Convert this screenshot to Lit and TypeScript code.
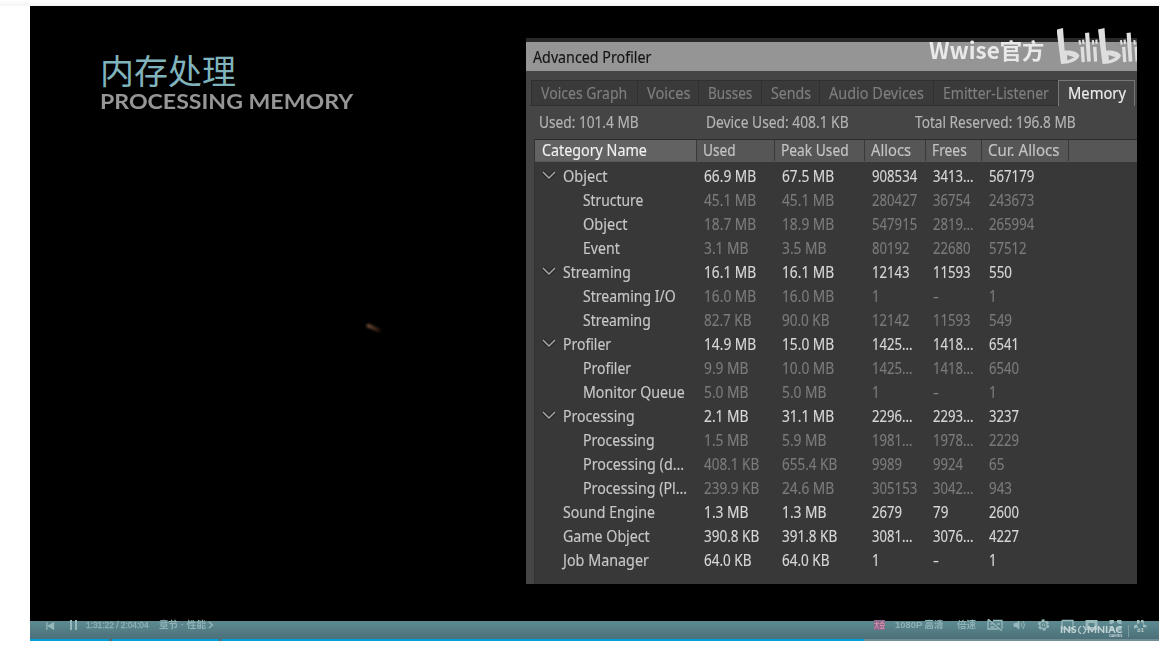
import { LitElement, html, css, svg } from "lit";
import { customElement, property } from "lit/decorators.js";

/** A single line of text condensed or widened to a given width. */
@customElement("fit-text")
class FitText extends LitElement {
  @property() text = "";
  @property({ type: Number }) w = 0;
  static styles = css`
    :host { display: block; white-space: pre; overflow: visible; flex: none; }
    span { display: inline-block; vertical-align: top; transform-origin: 0 50%; }
  `;
  updated() {
    const s = this.renderRoot.querySelector("span") as HTMLElement;
    this.style.width = this.w + "px";
    const natural = s.offsetWidth;
    if (natural) s.style.transform = `scaleX(${this.w / natural})`;
  }
  render() { return html`<span>${this.text}</span>`; }
}

type Row = [number, string, number, string, string, string, string, string];
// level: 0 = expandable group, 1 = child, 2 = plain top-level entry
const ROWS: Row[] = [
  [0, "Object", 44.5, "66.9 MB", "67.5 MB", "908534", "3413...", "567179"],
  [1, "Structure", 60.5, "45.1 MB", "45.1 MB", "280427", "36754", "243673"],
  [1, "Object", 44.5, "18.7 MB", "18.9 MB", "547915", "2819...", "265994"],
  [1, "Event", 37, "3.1 MB", "3.5 MB", "80192", "22680", "57512"],
  [0, "Streaming", 68, "16.1 MB", "16.1 MB", "12143", "11593", "550"],
  [1, "Streaming I/O", 93, "16.0 MB", "16.0 MB", "1", "-", "1"],
  [1, "Streaming", 68, "82.7 KB", "90.0 KB", "12142", "11593", "549"],
  [0, "Profiler", 48, "14.9 MB", "15.0 MB", "1425...", "1418...", "6541"],
  [1, "Profiler", 48, "9.9 MB", "10.0 MB", "1425...", "1418...", "6540"],
  [1, "Monitor Queue", 102, "5.0 MB", "5.0 MB", "1", "-", "1"],
  [0, "Processing", 72, "2.1 MB", "31.1 MB", "2296...", "2293...", "3237"],
  [1, "Processing", 72, "1.5 MB", "5.9 MB", "1981...", "1978...", "2229"],
  [1, "Processing (d...", 101, "408.1 KB", "655.4 KB", "9989", "9924", "65"],
  [1, "Processing (Pl...", 104, "239.9 KB", "24.6 MB", "305153", "3042...", "943"],
  [2, "Sound Engine", 92, "1.3 MB", "1.3 MB", "2679", "79", "2600"],
  [2, "Game Object", 87, "390.8 KB", "391.8 KB", "3081...", "3076...", "4227"],
  [2, "Job Manager", 86, "64.0 KB", "64.0 KB", "1", "-", "1"],
];
const TABS: [string, number, number][] = [
  ["Voices Graph", 86, 106], ["Voices", 43, 61], ["Busses", 44, 63], ["Sends", 40, 58],
  ["Audio Devices", 95, 114], ["Emitter-Listener", 106, 125], ["Memory", 58, 77],
];
const HEADS: [string, number][] = [
  ["Category Name", 104.5], ["Used", 32.5], ["Peak Used", 68], ["Allocs", 40.5], ["Frees", 34.5], ["Cur. Allocs", 71.5],
];
const ADV: Record<string, number> = { M: 13.4, B: 9, K: 8.4, " ": 4, ".": 3.3, "-": 5.7 };
const widthOf = (s: string) => [...s].reduce((a, c) => a + (ADV[c] ?? 7.55), 0);

@customElement("memory-profiler")
class MemoryProfiler extends LitElement {
  static styles = css`
    :host {
      display: flex; flex-direction: column; box-sizing: border-box; width: 611px; height: 546px;
      background: #454545; color: #b9b9b9; border-top: 4px solid #292929; overflow: hidden;
      font: 16px/24px "Noto Sans", sans-serif; -webkit-text-stroke: .15px currentColor;
    }
    .title { height: 29px; background: #959595; color: #141414; padding: 3px 0 0 7px; box-sizing: border-box; flex: none; }
    .tabs { display: flex; margin: 9px 0 0 4px; height: 25px; flex: none; border-bottom: 1px solid #343434; }
    .tab {
      box-sizing: border-box; height: 26px; padding: 0 0 0 9px; color: #7f7f7f; background: #3a3a3a;
      border: 1px solid #303030; border-right: 0;
    }
    .tab:first-child { margin-left: 1px; }
    .tab.on { background: #454545; color: #ececec; border: 1px solid #777; border-bottom: 0; }
    .stats { display: flex; height: 33px; padding: 4px 0 0 13px; box-sizing: border-box; flex: none; color: #b5b5b5; }
    .stats :nth-child(2) { margin-left: 67px; }
    .stats :nth-child(3) { margin-left: 66px; }
    .list { margin-left: 8px; flex: 1; background: #383838; border-left: 1px solid #333; border-top: 1px solid #2c2c2c; }
    .head, .row { display: grid; grid-template-columns: 162px 78px 90px 61px 56px 87px 1fr; }
    .head { background: #565656; height: 22px; line-height: 21px; color: #c4c4c4; }
    .head div { padding-left: 6px; border-right: 1px solid #393939; height: 21px; }
    .head div:first-child { padding-left: 7px; background: #626262; color: #f0f0f0; }
    .head div:last-child { border: 0; }
    .rows { padding-top: 2px; }
    .row { height: 24px; color: #d8d8d8; }
    .row > fit-text { margin-left: 7px; }
    .row.l1 > fit-text { color: #7b7b7b; }
    .name { display: flex; padding-left: 28px; color: #c7c7c7; }
    .l0 .name { padding-left: 6px; }
    .l1 .name { padding-left: 48px; }
    .name svg { width: 16px; height: 10px; margin: 6px 6px 0 0; flex: none; }
  `;
  render() {
    return html`
      <div class="title"><fit-text text="Advanced Profiler" .w=${118.5}></fit-text></div>
      <div class="tabs">${TABS.map(([t, w, box], i) => html`
        <div class="tab ${i === 6 ? "on" : ""}" style="width:${box}px"><fit-text .text=${t} .w=${w}></fit-text></div>`)}
      </div>
      <div class="stats">
        <fit-text text="Used: 101.4 MB" .w=${100}></fit-text>
        <fit-text text="Device Used: 408.1 KB" .w=${143}></fit-text>
        <fit-text text="Total Reserved: 196.8 MB" .w=${160.5}></fit-text>
      </div>
      <div class="list">
        <div class="head">${HEADS.map(([t, w]) => html`<div><fit-text .text=${t} .w=${w}></fit-text></div>`)}<div></div></div>
        <div class="rows">${ROWS.map(([l, n, w, ...vals]) => html`
          <div class="row l${l}">
            <div class="name">
              ${l === 0 ? html`<svg viewBox="0 0 16 10"><path d="M2 2l6 6 6-6" fill="none" stroke="#292929" stroke-width="4"/><path d="M2 2l6 6 6-6" fill="none" stroke="#ababab" stroke-width="1.4"/></svg>` : ""}
              <fit-text .text=${n} .w=${w}></fit-text>
            </div>
            ${vals.map((v) => html`<fit-text .text=${v} .w=${widthOf(v)}></fit-text>`)}
          </div>`)}
        </div>
      </div>`;
  }
}

const biliHalf = (x: number) => svg`
  <g transform="translate(${x} 0)">
    <path fill-rule="evenodd" d="M-.5 1.500L6 0l1.600 22.500C15 22 21 24 22.500 27.500c-1 5-10 8.500-18.500 8.500zM10 27l.4 5.500 6.800-3.300z"/>
    <path d="M23.500 19l3.400-.3 1 15.300-3.300.3zM28 5l4.200-.6 1.600 29.200-3.600.2zM36 19l3.500-.3.700 14.800-3.200.2z"/>
    <path d="M21.300 12.200l2.200-.3.700 4.600-2 .2zM25 11.700l2.200-.2.300 4.600-2 .2zM34.700 12.200l2.200-.3.500 4.600-2 .2zM38.300 11.700l2.200-.2v4.600l-2 .2z"/>
  </g>`;

@customElement("control-bar")
class ControlBar extends LitElement {
  static styles = css`
    :host { display: flex; flex-direction: column; height: 20px; font: 9px/10px "Liberation Sans", "Noto Sans CJK SC", sans-serif; color: #90b3b7; }
    .bar { position: relative; display: flex; height: 18px; background: linear-gradient(#5d8b91, #4b7079); box-sizing: border-box; padding-left: 15px; }
    svg { display: block; flex: none; fill: none; stroke: #98b9bc; stroke-width: 1.3; }
    .prev { width: 10px; height: 8px; margin-top: 1px; }
    .pause { width: 9px; height: 10px; margin: -1px 0 0 14px; }
    .time { margin: -1px 0 0 8px; -webkit-text-stroke: .3px currentColor; }
    .chapter { margin: -1px 0 0 10px; font-weight: 700; }
    .more { width: 6px; height: 8px; margin: 0 0 0 2px; }
    .right { display: flex; margin-left: auto; width: 285px; }
    .badge { width: 11px; height: 10px; margin-top: -1px; background: #8a6889; color: #cf8fab; font: 700 8px/10px "Noto Sans CJK JP", sans-serif; }
    .quality { margin: -1px 0 0 10px; font-weight: 700; }
    .speed { margin: -1px 0 0 14px; font-weight: 700; }
    .subs { width: 16px; height: 12px; margin: -2px 0 0 11px; }
    .vol { width: 13px; height: 12px; margin: -2px 0 0 10px; }
    .gear { width: 13px; height: 12px; margin: -2px 0 0 11px; }
    .win { width: 13px; height: 12px; margin: -2px 0 0 11px; }
    .win.bold { stroke-width: 3; }
    .logo { position: absolute; left: 1030px; top: 4px; display: flex; color: #c2d2d4; font: 900 9px/9px Lato, sans-serif; }
    .eye { width: 10px; height: 8px; margin-top: 1px; stroke: #c2d2d4; }
    .games { position: absolute; left: 49px; top: 9px; font-size: 3.500px; line-height: 4px; }
    .rule { position: absolute; left: 1098px; top: 4px; width: 1px; height: 12px; background: #7c9da2; }
    .page { position: absolute; left: 1103px; top: -2px; width: 14px; height: 12px; fill: #9fbcbf; stroke: none; }
    .num { position: absolute; left: 1107px; top: 5px; font: 700 6px/8px Lato, sans-serif; color: #c2d2d4; }
    .progress { display: flex; height: 2px; }
    .done { background: #00a1d6; }
    .gap { width: 3px; background: #4f7078; }
    .rest { flex: 1; background: #718f95; }
  `;
  render() {
    return html`
      <div class="bar">
        <svg class="prev" viewBox="0 0 10 9"><path d="M1.500 0v9M9 1v7L3 4.500z" fill="#98b9bc"/></svg>
        <svg class="pause" viewBox="0 0 9 10"><path d="M2 0v10M7 0v10" stroke-width="2"/></svg>
        <fit-text class="time" text="1:31:22 / 2:04:04" .w=${63}></fit-text>
        <fit-text class="chapter" text="章节 · 性能" .w=${47}></fit-text>
        <svg class="more" viewBox="0 0 6 8"><path d="M1 1l3.500 3L1 7"/></svg>
        <div class="right">
          <fit-text class="badge" text="大会" .w=${11}></fit-text>
          <fit-text class="quality" text="1080P 高清" .w=${48}></fit-text>
          <fit-text class="speed" text="倍速" .w=${19}></fit-text>
          <svg class="subs" viewBox="0 0 16 12"><path d="M3 1.500H1v8.500h10M6 1.500h9V10M1 0l14 12M3.500 5h2M3.500 8h4M10 5h3"/></svg>
          <svg class="vol" viewBox="0 0 13 12"><path d="M1 4.500h2l3-2.500v8L3 7.500H1z" fill="#98b9bc" stroke-width=".8"/><path d="M8 4q2 2 0 4M10 2q3 4 0 8" stroke-width="1"/></svg>
          <svg class="gear" viewBox="0 0 13 12"><circle cx="6.500" cy="6" r="4.600" stroke-width="2.200" stroke-dasharray="2.900 1.920"/><circle cx="6.500" cy="6" r="3.700"/><circle cx="6.500" cy="6" r="1.300" stroke-width="1"/></svg>
          <svg class="win" viewBox="0 0 13 12"><path d="M1 1.500h11v5M1 1.500v8h5M8 9h4v2H8z"/></svg>
          <svg class="win bold" viewBox="0 0 13 12"><path d="M2 2.500h9v7H2z"/></svg>
          <svg class="win bold" viewBox="0 0 13 12"><path d="M2 5V2.500h3M8 2.500h3V5M11 7v3H8M5 10H2V7"/></svg>
        </div>
        <div class="logo">
          <fit-text text="INS" .w=${17}></fit-text>
          <svg class="eye" viewBox="0 0 10 9"><path d="M4 0Q-2 4.500 4 9M6 0Q12 4.500 6 9"/></svg>
          <fit-text text="MNIAC" .w=${35}></fit-text>
          <fit-text class="games" text="GAMES" .w=${13}></fit-text>
        </div>
        <div class="rule"></div>
        <svg class="page" viewBox="0 0 14 12"><path d="M4 1h2.500v3L4 5zM8 1h2.500l.5 4-3-2zM1 6.500l3-1 1 3-4 1zM10 5l3.500 1.500v2L10 8z"/></svg>
        <div class="num">61</div>
      </div>
      <div class="progress">
        <div class="done" style="width:79px"></div><div class="gap"></div>
        <div class="done" style="width:107px"></div><div class="gap"></div>
        <div class="done" style="width:642px"></div><div class="rest"></div>
      </div>`;
  }
}

@customElement("app-root")
class AppRoot extends LitElement {
  static styles = css`
    :host { display: block; width: 1160px; height: 645px; box-sizing: border-box; padding: 6px 1px 0 30px; background: linear-gradient(#fff, #f3f5f5 6px, #fff 6px); overflow: hidden; }
    .video { position: relative; display: flex; justify-content: space-between; box-sizing: border-box; height: 615px; padding: 32px 22px 0 70px; background: #000; }
    .zh { margin-top: 14px; font: 400 34px/36px "Noto Sans CJK SC", sans-serif; color: #80b4bd; }
    .en { font: 700 21px/18px Lato, sans-serif; color: #969696; margin-top: 4px; }
    .mark { position: absolute; left: 899px; top: 18px; width: 208px; height: 42px; overflow: hidden; display: flex; color: #e9e9e9; font: 700 22px/32px "Noto Sans CJK SC", sans-serif; }
    .mark fit-text { margin-top: 9px; }
    .mark svg { width: 92px; height: 42px; margin-left: 13px; margin-top: 3px; fill: #dedede; flex: none; }
    .spark { position: absolute; left: 336px; top: 320px; width: 15px; height: 4px; border-radius: 2px; background: linear-gradient(90deg, #745039, #1b0e05); transform: rotate(24deg); filter: blur(.8px); }
  `;
  render() {
    return html`
      <div class="video">
        <div>
          <fit-text class="zh" text="内存处理" .w=${136}></fit-text>
          <fit-text class="en" text="PROCESSING MEMORY" .w=${253}></fit-text>
        </div>
        <memory-profiler></memory-profiler>
        <div class="mark">
          <fit-text text="Wwise官方" .w=${115}></fit-text>
          <svg viewBox="0 0 92 42"><g transform="translate(0 1)">${biliHalf(0)}${biliHalf(41.5)}</g></svg>
        </div>
        <div class="spark"></div>
      </div>
      <control-bar></control-bar>`;
  }
}
